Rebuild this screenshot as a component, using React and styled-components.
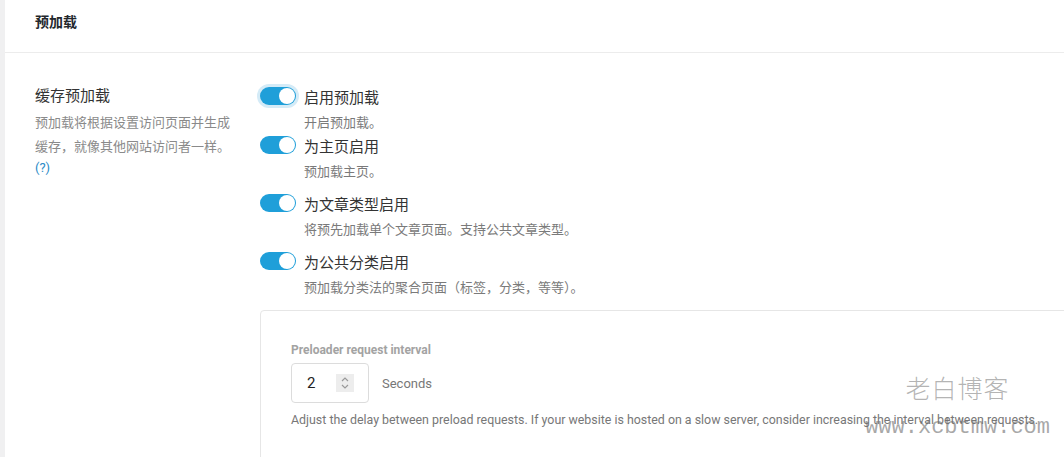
import styled, { createGlobalStyle } from "styled-components";

const GlobalStyle = createGlobalStyle`
	* { box-sizing: border-box; }
	html, body { margin: 0; padding: 0; background: #fff; }
	body {
		font-family: Roboto, "Noto Sans CJK SC", sans-serif;
		color: #333;
		overflow: hidden;
	}
`;

const Page = styled.div`
	display: flex;
	width: 1064px;
	height: 457px;
	position: relative;
	overflow: hidden;
`;

const Gutter = styled.div`
	width: 5px;
	flex-shrink: 0;
	background-color: #f0f0f1;
`;

const Main = styled.main`
	flex: 1;
	min-width: 0;
`;

const Header = styled.header`
	height: 53px;
	padding: 11px 30px;
	border-bottom: 1px solid #ececec;
`;

const Title = styled.h2`
	margin: 0;
	font-size: 14px;
	line-height: 22px;
	font-weight: bold;
	color: #23282d;
`;

const Section = styled.section`
	display: grid;
	grid-template-columns: 225px 1fr;
	padding: 31px 0 0 30px;
`;

const Aside = styled.div`
	padding-right: 20px;
`;

const SectionLabel = styled.h3`
	margin: 0;
	font-size: 15px;
	line-height: 24px;
	font-weight: normal;
	color: #333;
`;

const SectionDesc = styled.p`
	margin: 3px 0 0;
	font-size: 13px;
	line-height: 24px;
	color: #8a8a8a;
`;

const HelpLink = styled.a`
	display: block;
	margin-top: -2px;
	font-size: 13px;
	line-height: 22px;
	color: #2a8bc7;
	text-decoration: none;
`;

const Options = styled.div`
	display: flex;
	flex-direction: column;
`;

const Option = styled.div`
	margin-bottom: ${(p) => (p.$tight ? "0" : "9px")};
`;

const OptionHead = styled.div`
	display: flex;
	align-items: center;
	gap: 8px;
	height: 24px;
`;

const Toggle = styled.span`
	position: relative;
	display: inline-block;
	width: 36px;
	height: 18px;
	border-radius: 9px;
	background-color: #1f9fd9;
	box-shadow: ${(p) => (p.$focused ? "0 0 0 3px #d4ebf7" : "none")};

	&::after {
		content: "";
		position: absolute;
		top: 1px;
		right: 1px;
		width: 16px;
		height: 16px;
		border-radius: 50%;
		background: #fff;
	}
`;

const OptionLabel = styled.span`
	font-size: 15px;
	color: #333;
`;

const OptionDesc = styled.p`
	margin: 5px 0 0 44px;
	font-size: 13px;
	line-height: 20px;
	color: #7a7a7a;
`;

const Panel = styled.div`
	margin-top: 3px;
	margin-right: -20px;
	height: 170px;
	padding: 31px 30px 0;
	border: 1px solid #e6e6e6;
	border-radius: 4px;
`;

const FieldLabel = styled.label`
	display: block;
	font-size: 12px;
	line-height: 16px;
	font-weight: bold;
	color: #a3a3a3;
`;

const FieldRow = styled.div`
	display: flex;
	align-items: center;
	gap: 13px;
	margin-top: 5px;
`;

const NumberBox = styled.div`
	display: flex;
	align-items: center;
	justify-content: space-between;
	width: 78px;
	height: 40px;
	padding: 0 14px 0 15px;
	border: 1px solid #dcdcdc;
	border-radius: 4px;
	font-size: 15px;
	color: #222;
`;

const Spinner = styled.span`
	display: flex;
	align-items: center;
	justify-content: center;
	width: 18px;
	height: 18px;
	background: #ededed;
`;

const Unit = styled.span`
	font-size: 13px;
	color: #777;
`;

const FieldHelp = styled.p`
	margin: 7px 0 0;
	font-size: 12.4px;
	line-height: 20px;
	color: #777;
	white-space: nowrap;
`;

const Watermark = styled.div`
	position: absolute;
	right: 14px;
	bottom: 14px;
	display: flex;
	flex-direction: column;
	align-items: center;
	pointer-events: none;
`;

const MarkCn = styled.span`
	font-family: "Noto Sans CJK SC", sans-serif;
	font-weight: 300;
	font-size: 25px;
	line-height: 30px;
	letter-spacing: 1px;
	margin-bottom: 11px;
	color: rgba(130, 130, 130, 0.6);
`;

const MarkUrl = styled.span`
	font-family: "Liberation Mono", monospace;
	font-size: 22px;
	line-height: 30px;
	color: rgba(110, 110, 110, 0.6);
`;

const options = [
	{ label: "启用预加载", desc: "开启预加载。", tight: true, focused: true },
	{ label: "为主页启用", desc: "预加载主页。" },
	{ label: "为文章类型启用", desc: "将预先加载单个文章页面。支持公共文章类型。" },
	{ label: "为公共分类启用", desc: "预加载分类法的聚合页面（标签，分类，等等）。" },
];

function SpinIcon() {
	return (
		<svg width="10" height="14" viewBox="0 0 10 14" fill="none" stroke="#9a9a9a" strokeWidth="1.2">
			<path d="M2 5l3-3 3 3" />
			<path d="M2 9l3 3 3-3" />
		</svg>
	);
}

export default function App() {
	return (
		<>
			<GlobalStyle />
			<Page>
				<Gutter />
				<Main>
					<Header>
						<Title>预加载</Title>
					</Header>
					<Section>
						<Aside>
							<SectionLabel>缓存预加载</SectionLabel>
							<SectionDesc>预加载将根据设置访问页面并生成缓存，就像其他网站访问者一样。</SectionDesc>
							<HelpLink href="#">(?)</HelpLink>
						</Aside>
						<Options>
							{options.map((o) => (
								<Option key={o.label} $tight={o.tight}>
									<OptionHead>
										<Toggle $focused={o.focused} />
										<OptionLabel>{o.label}</OptionLabel>
									</OptionHead>
									<OptionDesc>{o.desc}</OptionDesc>
								</Option>
							))}
							<Panel>
								<FieldLabel>Preloader request interval</FieldLabel>
								<FieldRow>
									<NumberBox>
										2
										<Spinner>
											<SpinIcon />
										</Spinner>
									</NumberBox>
									<Unit>Seconds</Unit>
								</FieldRow>
								<FieldHelp>
									Adjust the delay between preload requests. If your website is hosted on a slow server, consider increasing the interval between requests.
								</FieldHelp>
							</Panel>
						</Options>
					</Section>
				</Main>
				<Watermark>
					<MarkCn>老白博客</MarkCn>
					<MarkUrl>www.xcbtmw.com</MarkUrl>
				</Watermark>
			</Page>
		</>
	);
}
